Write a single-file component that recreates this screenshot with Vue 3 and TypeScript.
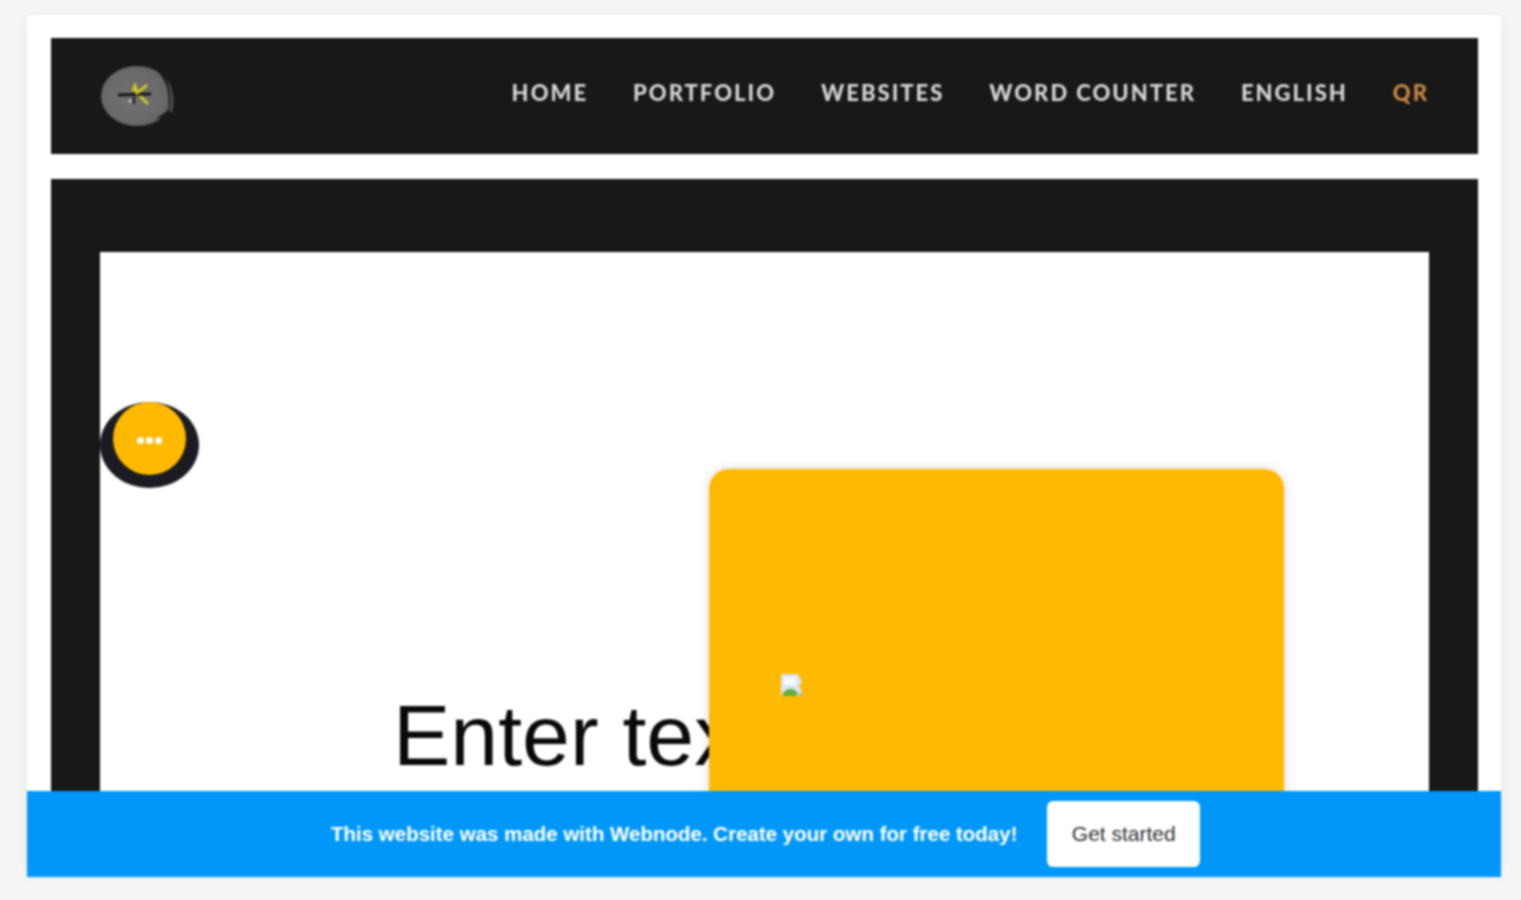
<template>
  <div class="page">
    <div class="frame">
      <header class="site-header">
        <svg class="logo" width="80" height="62" viewBox="0 0 80 62" aria-label="Logo">
          <defs>
            <radialGradient id="logoFill" cx="45%" cy="50%" r="60%">
              <stop offset="0" stop-color="#727272" />
              <stop offset="0.75" stop-color="#686868" />
              <stop offset="1" stop-color="#585858" />
            </radialGradient>
          </defs>
          <ellipse cx="37" cy="32" rx="36" ry="30" fill="url(#logoFill)" />
          <path d="M57 7 C63 13 67 20 68 28 C69 36 69 42 68 46 C64 50 60 52 56 54 L70 54 L76 30 L68 8Z" fill="#191919" />
          <path d="M66 14 C72 22 76 34 72 49 L69 47 C71 38 71 26 66 14Z" fill="#4e4e4e" />
          <path d="M18 31 L51 30" stroke="#141414" stroke-width="3" fill="none" />
          <path d="M33 27 L35 22 L37 29 L47 21 M40 32 L48 40" stroke="#d8ca1c" stroke-width="2.8" fill="none" />
          <path d="M34 33 L34 40" stroke="#222" stroke-width="2.5" />
          <circle cx="30" cy="37" r="1.6" fill="#ccc" />
        </svg>
        <nav class="main-nav">
          <a v-for="item in navItems" :key="item" class="nav-link" :class="{ active: item === 'QR' }" href="#">{{ item }}</a>
        </nav>
      </header>

      <main class="hero">
        <div class="hero-inner">
          <div class="hero-menu">
            <span class="hero-menu-button">
              <i></i><i></i><i></i>
            </span>
          </div>
          <h1 class="hero-title">Enter text</h1>
          <div class="hero-card">
            <svg class="broken-image" width="24" height="24" viewBox="0 0 24 24" aria-label="Image">
              <path d="M1 1 H18 L22 9 L19 13 L22 19 L18 23 H1Z" fill="#dbe4f6" />
              <path d="M4 4 H16 V12 H4Z" fill="#f7f9fe" />
              <path d="M2 22 C6 15 13 13 18 21 L16 23 H2Z" fill="#63ad3b" />
              <path d="M20 19 L24 23 H18Z" fill="#a9bccb" />
            </svg>
          </div>
        </div>
      </main>

      <div class="promo-bar">
        <span class="promo-text">This website was made with Webnode. Create your own for free today!</span>
        <a class="promo-button" href="#">Get started</a>
      </div>
    </div>
  </div>
</template>

<script setup lang="ts">
const navItems: string[] = ["HOME", "PORTFOLIO", "WEBSITES", "WORD COUNTER", "ENGLISH", "QR"];
</script>

<style>
html,
body {
  margin: 0;
  background: #f5f5f5;
  overflow: hidden;
}
</style>

<style scoped>
.page {
  height: 900px;
  box-sizing: border-box;
  padding: 15px 20px 23px 27px;
  overflow: hidden;
}

.frame {
  position: relative;
  height: 862px;
  box-sizing: border-box;
  padding: 23px 23px 0 24px;
  background: #fff;
  box-shadow: 0 0 10px rgba(0, 0, 0, 0.05);
  overflow: hidden;
  filter: blur(0.8px);
}

.site-header {
  display: flex;
  align-items: center;
  justify-content: space-between;
  height: 116px;
  box-sizing: border-box;
  padding: 0 49px 0 49px;
  background: #181818;
}

.logo {
  margin-top: -2px;
}

.main-nav {
  display: flex;
  gap: 45px;
  margin-top: -7px;
}

.nav-link {
  font-family: Lato, "Open Sans", sans-serif;
  font-size: 22px;
  font-weight: 900;
  letter-spacing: 2px;
  color: #d6d6d6;
  text-decoration: none;
  white-space: nowrap;
}

.nav-link.active {
  color: #c98b42;
}

.hero {
  margin-top: 25px;
  height: 700px;
  padding: 73px 49px 0;
  background: #181818;
}

.hero-inner {
  position: relative;
  display: flex;
  height: 100%;
  background: #fff;
}

.hero-menu {
  position: absolute;
  left: 0;
  top: 150px;
  display: flex;
  justify-content: center;
  width: 99px;
  height: 86px;
  border-radius: 50%;
  background: #1b1c23;
}

.hero-menu-button {
  display: flex;
  align-items: center;
  justify-content: center;
  gap: 2px;
  width: 73px;
  height: 73px;
  border-radius: 50%;
  background: #ffb900;
}

.hero-menu-button i {
  width: 7px;
  height: 7px;
  margin-top: 3px;
  border-radius: 50%;
  background: #fff;
}

.hero-title {
  flex: none;
  width: 316px;
  margin: 0 0 0 293px;
  padding-top: 433px;
  font-family: "Liberation Sans", Arial, sans-serif;
  font-size: 86px;
  font-weight: 400;
  line-height: 100px;
  color: #0a0a0a;
  white-space: nowrap;
}

.hero-card {
  position: relative;
  flex: none;
  width: 575px;
  height: 500px;
  margin-top: 217px;
  box-sizing: border-box;
  padding: 204px 0 0 71px;
  border-radius: 20px;
  background: #ffb900;
  box-shadow: 0 0 12px rgba(0, 0, 0, 0.16);
}

.broken-image {
  display: block;
}

.promo-bar {
  position: absolute;
  left: 0;
  right: 0;
  bottom: 0;
  display: flex;
  align-items: center;
  justify-content: center;
  gap: 30px;
  height: 86px;
  padding-left: 3px;
  background: #0097f8;
}

.promo-text {
  font-family: "Liberation Sans", Arial, sans-serif;
  font-size: 20.5px;
  font-weight: 700;
  color: #fff;
  white-space: nowrap;
}

.promo-button {
  display: flex;
  align-items: center;
  justify-content: center;
  width: 153px;
  height: 66px;
  border-radius: 6px;
  background: #fff;
  font-family: "Liberation Sans", Arial, sans-serif;
  font-size: 21px;
  color: #333;
  text-decoration: none;
}
</style>
